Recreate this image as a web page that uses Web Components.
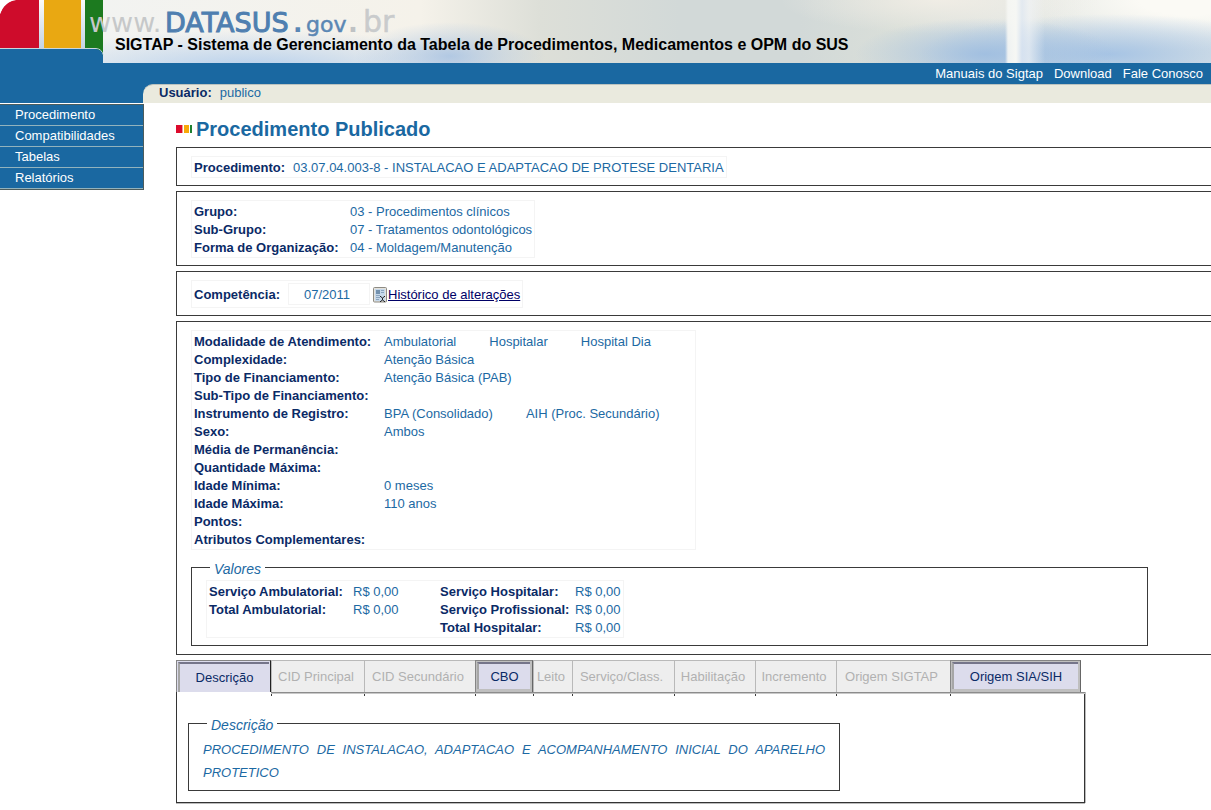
<!DOCTYPE html>
<html lang="pt-BR">
<head>
<meta charset="utf-8">
<title>SIGTAP - Procedimento Publicado</title>
<style>
  html { background: #fff; }
  body { margin: 0; font: 13px/16px "Liberation Sans", Arial, sans-serif; color: #1c69a3;
    --blue: #1a68a1; --navy: #0a2a66; --ink: #3a3a3a; overflow-x: hidden; }
</style>
</head>
<body>
<sig-page></sig-page>

<script>
const define = (name, html, setup) => {
  const template = document.createElement('template');
  template.innerHTML = html;
  customElements.define(name, class extends HTMLElement {
    constructor() {
      super();
      this.attachShadow({ mode: 'open' }).append(template.content.cloneNode(true));
    }
    connectedCallback() {
      if (setup && !this.ready) { this.ready = true; setup(this, this.shadowRoot); }
    }
  });
};

const element = (tag, text, attrs = {}) => {
  const el = document.createElement(tag);
  if (text) el.textContent = text;
  for (const [k, v] of Object.entries(attrs)) el.setAttribute(k, v);
  return el;
};

/* Each row is a list of [label, ...values] groups. */
const tables = {
  procedimento: [[['Procedimento:', '03.07.04.003-8 - INSTALACAO E ADAPTACAO DE PROTESE DENTARIA']]],
  grupo: [
    [['Grupo:', '03 - Procedimentos clínicos']],
    [['Sub-Grupo:', '07 - Tratamentos odontológicos']],
    [['Forma de Organização:', '04 - Moldagem/Manutenção']]
  ],
  atributos: [
    [['Modalidade de Atendimento:', 'Ambulatorial', 'Hospitalar', 'Hospital Dia']],
    [['Complexidade:', 'Atenção Básica']],
    [['Tipo de Financiamento:', 'Atenção Básica (PAB)']],
    [['Sub-Tipo de Financiamento:']],
    [['Instrumento de Registro:', 'BPA (Consolidado)', 'AIH (Proc. Secundário)']],
    [['Sexo:', 'Ambos']],
    [['Média de Permanência:']],
    [['Quantidade Máxima:']],
    [['Idade Mínima:', '0 meses']],
    [['Idade Máxima:', '110 anos']],
    [['Pontos:']],
    [['Atributos Complementares:']]
  ],
  valores: [
    [['Serviço Ambulatorial:', 'R$ 0,00'], ['Serviço Hospitalar:', 'R$ 0,00']],
    [['Total Ambulatorial:', 'R$ 0,00'], ['Serviço Profissional:', 'R$ 0,00']],
    [['', ''], ['Total Hospitalar:', 'R$ 0,00']]
  ]
};

define('sig-fields', `
<style>
  :host { display: block; }
  table { border: 1px solid #f4f4f4; padding: 1px; border-spacing: 0; min-width: var(--table-width, 0); }
  th, td { box-sizing: border-box; height: 18px; padding: 2px 1px 0; text-align: left; white-space: nowrap; }
  th { width: var(--label-width); color: var(--navy); font-weight: bold; }
  td + th { width: var(--label2-width); }
  td:not(:last-child) { width: 87px; }
  span + span { margin-left: 33px; }
</style>
<table><tbody></tbody></table>`, (host, root) => {
  const body = root.querySelector('tbody');
  for (const row of tables[host.getAttribute('data-set')]) {
    const tr = element('tr');
    for (const [label, ...values] of row) {
      tr.append(label ? element('th', label, { scope: 'row' }) : element('td'));
      const td = element('td');
      values.filter(Boolean).forEach(v => td.append(element('span', v)));
      tr.append(td);
    }
    body.append(tr);
  }
});

define('sig-box', `
<style>
  :host { display: block; border: 1px solid var(--ink); border-right: 0; padding: 8px 0 7px 14px; }
</style>
<slot></slot>`);

define('sig-group', `
<style>
  :host { display: block; }
  fieldset { margin: 0; min-width: 0; border: 1px solid var(--ink); padding: 3px 14px 7px; }
  legend { margin-left: 4px; padding: 3px 4px 0; font-size: 14px; line-height: 16px; font-style: italic; }
</style>
<fieldset><legend></legend><slot></slot></fieldset>`, (host, root) => {
  root.querySelector('legend').textContent = host.getAttribute('legend');
});

define('sig-competencia', `
<style>
  :host { display: flex; }
  .frame { display: flex; align-items: center; border: 1px solid #f4f4f4; padding: 2px; height: 22px; }
  b { color: var(--navy); width: 94px; line-height: 18px; padding-top: 2px; }
  .value { box-sizing: border-box; width: 82px; height: 22px; border: 1px solid #f4f4f4; padding: 3px 15px 0; margin-right: 3px; }
  a { display: flex; align-items: center; color: #000066; gap: 1px; padding-top: 1px; }
  svg { display: block; }
</style>
<div class="frame">
  <b>Competência:</b><span class="value">07/2011</span>
  <a href="#historico"><svg width="14" height="16" viewBox="0 0 14 16" aria-hidden="true">
    <rect x=".5" y=".5" width="13" height="14.500" rx="1" fill="#e4e2dc" stroke="#8d8b84"/>
    <rect x="2" y="2" width="10" height="12" fill="#c6d8ea"/>
    <path d="M3 3h4v4H3z" fill="#7391ae"/>
    <path d="M8 3.500h3M8 5.500h3M3 8.500h4M3 10.500h4M3 12.500h3" stroke="#8aa5bf"/>
    <path d="M7 9.500h1l1.500 2 1.500-2h1M9.500 11v2M7 14.500h1l1.500-2 1.500 2h1" stroke="#222" fill="none"/>
  </svg>Histórico de alterações</a>
</div>`);

define('sig-banner', `
<style>
  :host { display: block; position: relative; min-height: 63px; overflow: hidden;
    background:
      linear-gradient(90deg, transparent 1005px, rgba(246,247,244,.9) 1008px, #f6f7f4 1016px, rgba(225,233,243,.8) 1022px, rgba(240,243,246,.7) 1029px, transparent 1045px),
      radial-gradient(ellipse 95px 34px at 450px 56px, rgba(164,192,226,.8), rgba(164,192,226,.3) 60%, transparent),
      radial-gradient(ellipse 130px 36px at 985px 54px, rgba(154,187,224,.85), rgba(154,187,224,.35) 60%, transparent),
      radial-gradient(ellipse 190px 40px at 1110px 54px, rgba(160,192,228,.9), rgba(160,192,228,.4) 60%, transparent),
      radial-gradient(ellipse 240px 38px at 250px 68px, rgba(176,204,236,.9), rgba(184,208,236,.4) 60%, transparent),
      radial-gradient(ellipse 160px 34px at 940px 0, rgba(242,238,230,.9), transparent),
      radial-gradient(ellipse 170px 50px at 1190px 0, #fbfaf5 30%, transparent),
      linear-gradient(90deg, #f2f3f1 100px, #f5f2ea 420px, #dddfd8 540px, #d2d9d8 680px, #d2d9d8 800px, #dadfd9 900px, #e2e6e2 1000px, #e8ebe8 1211px); }
  svg { position: absolute; left: 0; top: 0; }
  h1 { position: relative; margin: 0; padding: 35px 0 0 115px; font-size: 16px; line-height: 20px; color: #000; white-space: nowrap; }
  svg text { font-family: "DejaVu Sans", sans-serif; }
</style>
<svg width="410" height="63" viewBox="0 0 410 63" role="img" aria-label="www.DATASUS.gov.br">
  <defs>
    <linearGradient id="gap" x2="0" y2="1"><stop stop-color="#fbfbfa"/><stop offset="1" stop-color="#c4d3e4"/></linearGradient>
  </defs>
  <rect width="103" height="49" fill="url(#gap)"/>
  <path d="M0 48V14C3 6 8 1 16 0H39V48Z" fill="#ce0c2b"/>
  <path d="M0 0H16C8 1 3 6 0 14Z" fill="#fff"/>
  <rect x="44" width="37" height="48" fill="#e9a812"/>
  <rect x="85" width="18" height="56" fill="#1c7a1f"/>
  <path d="M0 48.500H96Q102 49 103 55" fill="none" stroke="#c9d6dc"/>
  <path d="M0 49H95Q102 49 103 56V63H0Z" fill="#1a68a1"/>
  <text x="89" y="32" font-size="27" fill="#c6c8c9">www.</text>
  <text x="165" y="32" font-size="27" fill="#4f7fb0" stroke="#4f7fb0" stroke-width="1">DATASUS</text>
  <text x="293" y="32" font-size="25" font-weight="bold" fill="#5a87b4">.</text>
  <text x="306" y="32" font-size="22" fill="#5a87b4" stroke="#5a87b4" stroke-width=".5">gov</text>
  <text x="348" y="32" font-size="26" font-weight="bold" fill="#bfc2c4">.</text>
  <text x="363" y="32" font-size="30" fill="#c9cbcc" stroke="#c9cbcc" stroke-width=".5">br</text>
</svg>
<h1>SIGTAP - Sistema de Gerenciamento da Tabela de Procedimentos, Medicamentos e OPM do SUS</h1>`);

define('sig-topnav', `
<style>
  :host { display: flex; justify-content: flex-end; align-items: flex-end; gap: 11px; min-height: 19px; padding: 0 8px 2px; background: var(--blue); }
  a { color: #fff; text-decoration: none; white-space: nowrap; }
</style>
<a href="#manuais">Manuais do Sigtap</a><a href="#download">Download</a><a href="#contato">Fale Conosco</a>`);

define('sig-userbar', `
<style>
  :host { display: block; background: var(--blue); padding-left: 143px; }
  div { display: flex; gap: 8px; height: 18px; padding-left: 16px; background: #eaeade;
    border-top: 1px solid #bcc3bf; border-top-left-radius: 10px; }
  b { color: var(--navy); }
</style>
<div><b>Usuário:</b><span>publico</span></div>`);

define('sig-menu', `
<style>
  :host { display: block; }
  nav { margin-top: 1px; background: var(--blue); border: 1px solid #4c5c5c; border-left: 0; }
  a { display: block; line-height: 20px; padding-left: 15px; border-bottom: 1px solid #92b3bd; color: #fff; text-decoration: none; }
</style>
<nav aria-label="Menu">
  <a href="#procedimento">Procedimento</a><a href="#compatibilidades">Compatibilidades</a><a href="#tabelas">Tabelas</a><a href="#relatorios">Relatórios</a>
</nav>`);

define('sig-heading', `
<style>
  :host { display: block; }
  h2 { display: flex; align-items: center; gap: 4px; margin: 0; font-size: 20px; line-height: 24px; color: var(--blue); }
</style>
<h2><svg width="16" height="8" viewBox="0 0 16 8" aria-hidden="true"><path fill="#dc0a2c" d="M0 0h6v8H0z"/><path fill="#f0a090" d="M6 0h1v8H6z"/><path fill="#f8a808" d="M8 0h5v8H8z"/><path fill="#1f8030" d="M14 0h2v8h-2z"/></svg><slot></slot></h2>`);

const tabs = [
  ['Descrição', 'active'], ['CID Principal'], ['CID Secundário'], ['CBO', 'enabled'], ['Leito'], ['Serviço/Class.'],
  ['Habilitação'], ['Incremento'], ['Origem SIGTAP'], ['Origem SIA/SIH', 'enabled']
];

define('sig-tabs', `
<style>
  :host { display: block; width: 910px; }
  .tabs { display: grid; grid-template-columns: 95px 93px 111px 58px 39px 102px 81px 81px 114px 131px; height: 32px; }
  button { position: relative; font: inherit; margin: 0; border: solid #b9b9b9; border-width: 1px 0 0 1px; padding: 0 4px 0 0; background: #eee; color: #b1b1b1; white-space: nowrap; }
  button::after { content: ""; position: absolute; left: -1px; bottom: -4px; width: 1px; height: 3px; background: var(--ink); }
  button.active, button.enabled { color: var(--navy); display: flex; padding: 1px 0 0 1px; border-color: #858585; background: #bfbfbf; }
  .active span, .enabled span { flex: 1; align-self: stretch; display: flex; align-items: center; justify-content: center;
    background: #dcdcec; border: solid #a6a6a6; border-top-color: #75758a; border-width: 2px 0 0 2px; }
  button.enabled { padding: 1px 2px 3px 1px; border-right: 1px solid #666; }
  button.active { padding: 1px 1px 0 1px; border-right: 1px solid #222; background: #dcdcec; }
  button.active::after { display: none; }
  .panel { position: relative; border: 1px solid #333; border-top: 0; box-shadow: 0 1px #bbb, 1px 0 #bbb; width: 907px; padding: 22px 0 11px; }
  .rule { position: absolute; top: 0; left: 94px; right: -1px; height: 1px; background: #8c8c8c; border-bottom: 1px solid #c8c8c8; }
  ::slotted(*) { margin-left: 11px; width: 652px; }
</style>
<div class="tabs" role="tablist"></div>
<div class="panel" role="tabpanel"><div class="rule"></div><slot></slot></div>`, (host, root) => {
  const list = root.querySelector('.tabs');
  for (const [label, state] of tabs) {
    const button = element('button', '', { type: 'button', role: 'tab', 'aria-selected': state === 'active' });
    if (state) button.className = state; else button.disabled = true;
    button.append(element('span', label));
    list.append(button);
  }
});

define('sig-page', `
<style>
  :host { display: block; }
  .body { display: grid; grid-template-columns: 144px minmax(0, 1fr); }
  main { display: flex; flex-direction: column; gap: 5px; padding: 14px 0 7px 32px; }
  sig-heading { margin-bottom: 1px; }
  .procedimento { --label-width: 99px; }
  .grupo { --label-width: 156px; }
  .atributos { --label-width: 190px; --table-width: 505px; }
  .valores { --label-width: 144px; --label2-width: 135px; }
  .total { margin: 8px 63px 1px 0; }
  p { margin: 2px 0 -1px; font-style: italic; line-height: 23px; text-align: justify; }
</style>
<sig-banner></sig-banner>
<sig-topnav></sig-topnav>
<sig-userbar></sig-userbar>
<div class="body">
  <sig-menu></sig-menu>
  <main>
    <sig-heading>Procedimento Publicado</sig-heading>
    <sig-box><sig-fields class="procedimento" data-set="procedimento"></sig-fields></sig-box>
    <sig-box><sig-fields class="grupo" data-set="grupo"></sig-fields></sig-box>
    <sig-box><sig-competencia></sig-competencia></sig-box>
    <sig-box>
      <sig-fields class="atributos" data-set="atributos"></sig-fields>
      <sig-group class="total" legend="Valores"><sig-fields class="valores" data-set="valores"></sig-fields></sig-group>
    </sig-box>
    <sig-tabs>
      <sig-group legend="Descrição"><p>PROCEDIMENTO DE INSTALACAO, ADAPTACAO E ACOMPANHAMENTO INICIAL DO APARELHO PROTETICO</p></sig-group>
    </sig-tabs>
  </main>
</div>`);
</script>
</body>
</html>
